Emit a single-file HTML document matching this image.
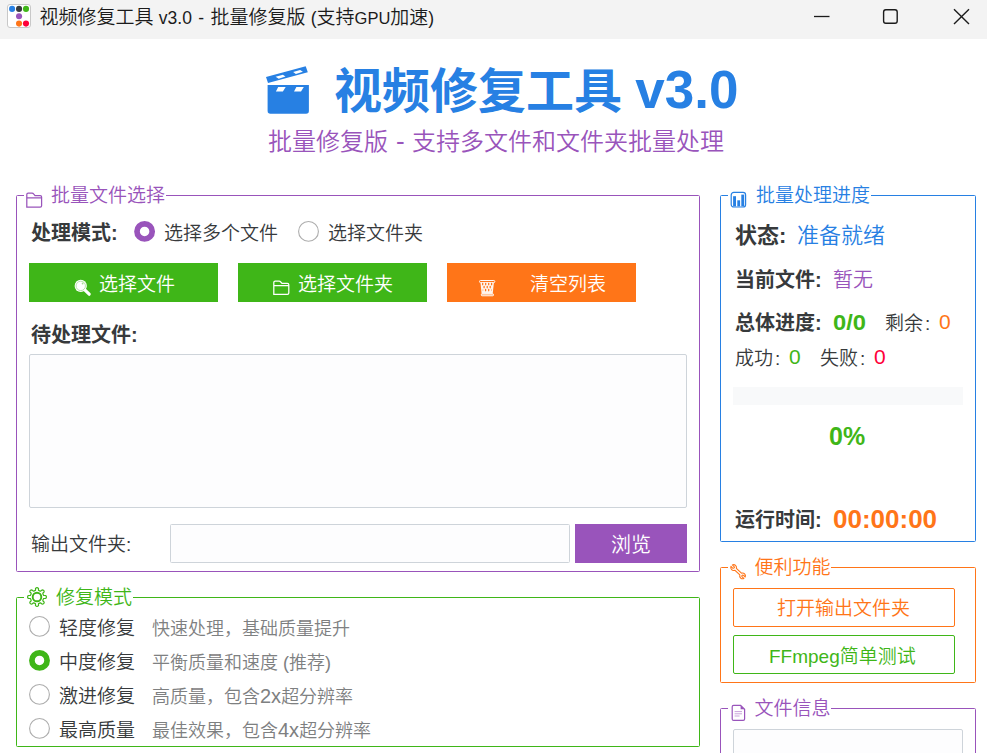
<!DOCTYPE html>
<html lang="zh-CN">
<head>
<meta charset="utf-8">
<title>视频修复工具 v3.0</title>
<style>
html,body{margin:0;padding:0;}
body{width:987px;height:753px;overflow:hidden;background:#fff;position:relative;
  font-family:"Liberation Sans","Noto Sans CJK SC",sans-serif;color:#373a3c;font-weight:350;}
.abs{position:absolute;white-space:nowrap;}
.t{position:absolute;white-space:nowrap;line-height:1;}
.b{font-weight:700;}
#titlebar{position:absolute;left:0;top:0;width:987px;height:39px;background:#f3f3f3;}
.box{position:absolute;border:1px solid;border-radius:1.5px;box-sizing:border-box;}
.legend{position:absolute;background:#fff;white-space:nowrap;line-height:1;}
.btn{position:absolute;box-sizing:border-box;color:#fff;}
.field{position:absolute;box-sizing:border-box;border:1px solid #ced4da;background:#fdfdfe;border-radius:1.5px;}
.c{margin-left:2px;}
.t span{line-height:0;}
svg{overflow:visible;}
</style>
</head>
<body>
<!-- title bar -->
<div id="titlebar">
  <svg class="abs" style="left:7px;top:4px" width="24" height="24" viewBox="0 0 24 24">
    <rect x="0.5" y="0.5" width="23" height="23" rx="2.5" fill="#fff" stroke="#c8c8c8"/>
    <circle cx="5.1" cy="4.9" r="3.05" fill="#2780e3"/>
    <circle cx="12.05" cy="4.9" r="3.05" fill="#373a3c"/>
    <circle cx="19" cy="4.9" r="3.05" fill="#3fb618"/>
    <circle cx="12.05" cy="12.2" r="3.05" fill="#9954bb"/>
    <circle cx="12.05" cy="19.6" r="3.05" fill="#ff7518"/>
    <circle cx="19" cy="19.6" r="3.05" fill="#ff0039"/>
  </svg>
  <div class="t" id="tbtext" style="left:39.5px;top:8px;font-size:19px;color:#1b1b1b;">视频修复工具 <span style="font-size:17.5px;word-spacing:1.5px">v3.0 - </span>批量修复版 <span style="font-size:17.5px">(</span>支持<span style="font-size:16.5px">GPU</span>加速<span style="font-size:17.5px">)</span></div>
  <svg class="abs" style="left:800px;top:0" width="187" height="38" viewBox="0 0 187 38">
    <path d="M14 16.5H29.5" stroke="#1b1b1b" stroke-width="1.3" fill="none"/>
    <rect x="83.6" y="9.7" width="13.6" height="13.6" rx="2.2" stroke="#1b1b1b" stroke-width="1.4" fill="none"/>
    <path d="M154 9.3L169 24M169 9.3L154 24" stroke="#1b1b1b" stroke-width="1.4" fill="none"/>
  </svg>
</div>

<!-- header -->
<svg class="abs" style="left:260px;top:60px" width="56" height="60" viewBox="0 0 56 60">
  <g fill="#2780e3">
    <path d="M6 17.1 L45.7 6.2 L47.8 12.2 L8 22.9 Z"/>
    <path d="M7.6 24.9 H48.9 V51 Q48.9 53.8 46.1 53.8 H10.4 Q7.6 53.8 7.6 51 Z"/>
  </g>
  <g fill="#fff">
    <path d="M15.6 16.8 L22.9 14.7 L25.5 16.6 L18.7 18.7 Z"/>
    <path d="M33.1 12 L40.1 9.9 L42.9 11.7 L35.9 14.1 Z"/>
    <path d="M18.2 27.1 H25.7 L22.9 31.4 H15.9 Z"/>
    <path d="M36.4 27.1 H43.8 L41 31.4 H34 Z"/>
  </g>
</svg>
<div class="t b" id="title" style="left:334px;top:68px;font-size:48px;color:#2780e3;">视频修复工具 <span style="font-size:53px">v3.0</span></div>
<div class="t" id="sub1" style="left:268px;top:130px;font-size:24px;color:#9954bb;">批量修复版</div>
<div class="t" id="sub2" style="left:396px;top:128px;font-size:26px;color:#9954bb;">-</div>
<div class="t" id="sub3" style="left:412px;top:130px;font-size:24px;color:#9954bb;">支持多文件和文件夹批量处理</div>

<!-- batch file selection -->
<div class="box" style="left:16px;top:195px;width:684px;height:377px;border-color:#9954bb;"></div>
<div class="legend" style="left:24px;top:184px;width:141.5px;height:24px;"></div>
<svg class="abs" style="left:26px;top:192px" width="17" height="17" viewBox="0 0 17 17">
  <path d="M0.8 15.2 V2.6 Q0.8 1.2 2.2 1.2 H6 Q7 1.2 7.8 2.2 L9 3.6 H14.2 Q15.6 3.6 15.6 5 V13.8 Q15.6 15.2 14.2 15.2 Z M0.8 5.8 H15.6" fill="none" stroke="#9954bb" stroke-width="1.25"/>
</svg>
<div class="t" id="lg1" style="left:51px;top:186px;font-size:19px;color:#9954bb;">批量文件选择</div>

<div class="t b" id="mode" style="left:31px;top:223px;font-size:20px;">处理模式:</div>
<svg class="abs" style="left:134px;top:221px" width="21" height="21"><circle cx="10.6" cy="10.4" r="7.6" fill="#fff" stroke="#9954bb" stroke-width="5.7"/></svg>
<div class="t" id="r1" style="left:164px;top:224px;font-size:19px;">选择多个文件</div>
<svg class="abs" style="left:298px;top:221px" width="21" height="21"><circle cx="10.5" cy="10.4" r="9.9" fill="#fff" stroke="#adadad" stroke-width="1.1"/></svg>
<div class="t" id="r2" style="left:328px;top:224px;font-size:19px;">选择文件夹</div>

<div class="btn" style="left:29px;top:263px;width:189px;height:39px;background:#3fb618;"></div>
<div class="btn" style="left:238px;top:263px;width:189px;height:39px;background:#3fb618;"></div>
<div class="btn" style="left:447px;top:263px;width:189px;height:39px;background:#ff7518;"></div>
<!-- magnifier -->
<svg class="abs" style="left:73px;top:278px" width="20" height="20" viewBox="0 0 20 20">
  <path d="M12 12.2 L16.2 16.2" stroke="#fff" stroke-width="3.2" stroke-linecap="round"/>
  <circle cx="7.75" cy="7.9" r="6.1" fill="#fff"/>
  <circle cx="7.75" cy="7.9" r="4.7" fill="none" stroke="#a5dc92" stroke-width="0.8"/>
  <circle cx="9.6" cy="5.5" r="0.9" fill="#a5dc92"/>
</svg>
<div class="t" id="b1" style="left:99px;top:275px;font-size:19px;color:#fff;">选择文件</div>
<!-- folder white -->
<svg class="abs" style="left:273px;top:280px" width="17" height="16" viewBox="0 0 17 16">
  <path d="M0.8 14.4 V2.4 Q0.8 1 2.2 1 H6 Q7 1 7.8 2 L9 3.4 H14.4 Q15.8 3.4 15.8 4.8 V13 Q15.8 14.4 14.4 14.4 Z M0.8 5.6 H15.8" fill="none" stroke="#fff" stroke-width="1.25"/>
</svg>
<div class="t" id="b2" style="left:298px;top:275px;font-size:19px;color:#fff;">选择文件夹</div>
<!-- trash -->
<svg class="abs" style="left:472px;top:272px" width="30" height="30" viewBox="0 0 30 30">
  <path d="M8.5 10.8 H21.9 L20.7 21.8 H9.6 Z" fill="#fff" fill-opacity="0.93"/>
  <rect x="7.5" y="8.5" width="15.3" height="2.1" rx="1" fill="none" stroke="#fff" stroke-width="0.95"/>
  <rect x="9.3" y="21.8" width="12.2" height="2" rx="0.8" fill="#fff" fill-opacity="0.45" stroke="#fff" stroke-width="0.9"/>
  <g fill="#ff7518">
    <ellipse cx="10.7" cy="12.1" rx="0.7" ry="1.3"/><ellipse cx="13.7" cy="12.1" rx="0.7" ry="1.3"/><ellipse cx="16.7" cy="12.1" rx="0.7" ry="1.3"/><ellipse cx="19.6" cy="12.1" rx="0.7" ry="1.3"/>
    <ellipse cx="12.1" cy="15.1" rx="0.7" ry="1.3"/><ellipse cx="15.2" cy="15.1" rx="0.7" ry="1.3"/><ellipse cx="18.2" cy="15.1" rx="0.7" ry="1.3"/>
    <ellipse cx="13.6" cy="18.1" rx="0.7" ry="1.3"/><ellipse cx="16.7" cy="18.1" rx="0.7" ry="1.3"/>
    <ellipse cx="10.9" cy="18.1" rx="0.45" ry="1.1" fill-opacity="0.5"/><ellipse cx="19.4" cy="18.1" rx="0.45" ry="1.1" fill-opacity="0.5"/>
  </g>
</svg>
<div class="t" id="b3" style="left:530px;top:275px;font-size:19px;color:#fff;">清空列表</div>

<div class="t b" id="pend" style="left:31px;top:325px;font-size:20px;">待处理文件:</div>
<div class="field" style="left:29px;top:354px;width:658px;height:154px;border-radius:2px;"></div>

<div class="t" id="outl" style="left:31px;top:535px;font-size:19px;">输出文件夹:</div>
<div class="field" style="left:170px;top:524px;width:400px;height:39px;"></div>
<div class="btn" style="left:575px;top:524px;width:112px;height:39px;background:#9954bb;"></div>
<div class="t" id="brow" style="left:611px;top:535px;font-size:20px;color:#fff;">浏览</div>

<!-- repair mode -->
<div class="box" style="left:16px;top:597px;width:684px;height:150px;border-color:#3fb618;"></div>
<div class="legend" style="left:24px;top:586px;width:108.5px;height:24px;"></div>
<svg class="abs" style="left:27px;top:587px" width="20" height="20" viewBox="-10 -10 20 20">
  <g fill="none" stroke="#3fb618" stroke-width="1.2">
    <path d="M-1.48 -6.74 L-1.48 -8.67 Q0.00 -10.20 1.48 -8.67 L1.48 -6.74 Q2.45 -5.91 3.72 -5.81 L5.09 -7.18 Q7.21 -7.21 7.18 -5.09 L5.81 -3.72 Q5.91 -2.45 6.74 -1.48 L8.67 -1.48 Q10.20 0.00 8.67 1.48 L6.74 1.48 Q5.91 2.45 5.81 3.72 L7.18 5.09 Q7.21 7.21 5.09 7.18 L3.72 5.81 Q2.45 5.91 1.48 6.74 L1.48 8.67 Q0.00 10.20 -1.48 8.67 L-1.48 6.74 Q-2.45 5.91 -3.72 5.81 L-5.09 7.18 Q-7.21 7.21 -7.18 5.09 L-5.81 3.72 Q-5.91 2.45 -6.74 1.48 L-8.67 1.48 Q-10.20 0.00 -8.67 -1.48 L-6.74 -1.48 Q-5.91 -2.45 -5.81 -3.72 L-7.18 -5.09 Q-7.21 -7.21 -5.09 -7.18 L-3.72 -5.81 Q-2.45 -5.91 -1.48 -6.74 Z" stroke-linejoin="round"/>
    <circle cx="0" cy="0" r="4.3" stroke-width="1.9"/>
  </g>
</svg>
<div class="t" id="lg2" style="left:56px;top:588px;font-size:19px;color:#3fb618;">修复模式</div>

<svg class="abs" style="left:29px;top:616px" width="21" height="21"><circle cx="10.5" cy="10.4" r="9.9" fill="#fff" stroke="#adadad" stroke-width="1.1"/></svg>
<div class="t" id="m1" style="left:59px;top:619px;font-size:19px;">轻度修复</div>
<div class="t" id="d1" style="left:152px;top:620px;font-size:18px;color:#7e8081;">快速处理，基础质量提升</div>
<svg class="abs" style="left:29px;top:650px" width="21" height="21"><circle cx="10.5" cy="10.4" r="7.6" fill="#fff" stroke="#3fb618" stroke-width="5.7"/></svg>
<div class="t" id="m2" style="left:59px;top:653px;font-size:19px;">中度修复</div>
<div class="t" id="d2" style="left:152px;top:654px;font-size:18px;color:#7e8081;">平衡质量和速度 (推荐)</div>
<svg class="abs" style="left:29px;top:684px" width="21" height="21"><circle cx="10.5" cy="10.4" r="9.9" fill="#fff" stroke="#adadad" stroke-width="1.1"/></svg>
<div class="t" id="m3" style="left:59px;top:687px;font-size:19px;">激进修复</div>
<div class="t" id="d3" style="left:152px;top:688px;font-size:18px;color:#7e8081;">高质量，包含<span style="font-size:20px">2x</span>超分辨率</div>
<svg class="abs" style="left:29px;top:718px" width="21" height="21"><circle cx="10.5" cy="10.4" r="9.9" fill="#fff" stroke="#adadad" stroke-width="1.1"/></svg>
<div class="t" id="m4" style="left:59px;top:721px;font-size:19px;">最高质量</div>
<div class="t" id="d4" style="left:152px;top:722px;font-size:18px;color:#7e8081;">最佳效果，包含<span style="font-size:20px">4x</span>超分辨率</div>

<!-- progress -->
<div class="box" style="left:720px;top:195px;width:256px;height:347px;border-color:#2780e3;"></div>
<div class="legend" style="left:728px;top:184px;width:142.5px;height:24px;"></div>
<svg class="abs" style="left:730px;top:191px" width="17" height="17" viewBox="0 0 17 17">
  <rect x="1.2" y="1.4" width="14.4" height="14.6" rx="2.6" fill="#fff" stroke="#2780e3" stroke-width="1.2"/>
  <rect x="3.1" y="5.2" width="2.9" height="10.2" fill="#2780e3"/>
  <rect x="7.3" y="9.3" width="2.8" height="6.1" fill="#2780e3"/>
  <rect x="11.3" y="3.6" width="2.9" height="11.8" fill="#2780e3"/>
</svg>
<div class="t" id="lg3" style="left:756px;top:186px;font-size:19px;color:#2780e3;">批量处理进度</div>

<div class="t b" id="st" style="left:735px;top:225px;font-size:22px;">状态:</div>
<div class="t" id="stv" style="left:797px;top:225px;font-size:22px;color:#2780e3;">准备就绪</div>
<div class="t b" id="cur" style="left:735px;top:270px;font-size:20px;">当前文件:</div>
<div class="t" id="curv" style="left:833px;top:270px;font-size:20px;color:#9954bb;">暂无</div>
<div class="t b" id="tot" style="left:735px;top:313px;font-size:20px;">总体进度:</div>
<div class="t b" id="totv" style="left:833px;top:312px;font-size:22px;transform:scaleX(1.08);transform-origin:0 50%;color:#3fb618;">0/0</div>
<div class="t" id="rem" style="left:885px;top:314px;font-size:19px;">剩余<span class="c">:</span></div>
<div class="t" id="remv" style="left:939px;top:311px;font-size:21px;color:#ff7518;">0</div>
<div class="t" id="suc" style="left:735px;top:349px;font-size:19px;">成功<span class="c">:</span></div>
<div class="t" id="sucv" style="left:789px;top:346px;font-size:21px;color:#3fb618;">0</div>
<div class="t" id="fail" style="left:820px;top:349px;font-size:19px;">失败<span class="c">:</span></div>
<div class="t" id="failv" style="left:874px;top:346px;font-size:21px;color:#ff0039;">0</div>
<div class="abs" style="left:733px;top:387px;width:230px;height:18px;background:#f8f9fa;"></div>
<div class="t b" id="pct" style="left:829px;top:424px;font-size:25px;color:#3fb618;">0%</div>
<div class="t b" id="rt" style="left:735px;top:510px;font-size:20px;">运行时间:</div>
<div class="t b" id="rtv" style="left:833px;top:506px;font-size:26px;color:#ff7518;">00:00:00</div>

<!-- tools -->
<div class="box" style="left:720px;top:567px;width:256px;height:116px;border-color:#ff7518;"></div>
<div class="legend" style="left:728px;top:556px;width:103px;height:24px;"></div>
<svg class="abs" style="left:729px;top:563px" width="18" height="18" viewBox="0 0 18 18">
  <g transform="translate(9.1,8.7) rotate(43) scale(0.85)">
    <path d="M-4.1 -1.4 A3.4 3.4 0 0 0 -10.38 -1.2 L-7.6 -1.2 A1.2 1.2 0 0 1 -7.6 1.2 L-10.38 1.2 A3.4 3.4 0 0 0 -4.1 1.4 L4.1 1.4 A3.4 3.4 0 0 0 10.38 1.2 L7.6 1.2 A1.2 1.2 0 0 1 7.6 -1.2 L10.38 -1.2 A3.4 3.4 0 0 0 4.1 -1.4 Z" fill="#fff" stroke="#ff7518" stroke-width="1.3" stroke-linejoin="round"/>
  </g>
</svg>
<div class="t" id="lg4" style="left:754.5px;top:558px;font-size:19px;color:#ff7518;">便利功能</div>
<div class="btn" style="left:733px;top:588px;width:222px;height:39px;border:1px solid #ff7518;border-radius:2px;"></div>
<div class="t" id="ob" style="left:777px;top:599px;font-size:19px;color:#ff7518;">打开输出文件夹</div>
<div class="btn" style="left:733px;top:635px;width:222px;height:39px;border:1px solid #3fb618;border-radius:2px;"></div>
<div class="t" id="fb" style="left:769px;top:647px;font-size:19px;color:#3fb618;"><span style="font-size:19px">FFmpeg</span>简单测试</div>

<!-- file info -->
<div class="box" style="left:720px;top:708px;width:256px;height:80px;border-color:#9954bb;"></div>
<div class="legend" style="left:728px;top:697px;width:103px;height:24px;"></div>
<svg class="abs" style="left:731px;top:704px" width="15" height="18" viewBox="0 0 15 18">
  <path d="M2.6 1.3 H9.6 L13.6 5.3 V15 Q13.6 16.4 12.2 16.4 H2.6 Q1.2 16.4 1.2 15 V2.7 Q1.2 1.3 2.6 1.3 Z" fill="#fff" stroke="#9954bb" stroke-width="1.2"/>
  <path d="M9.6 1.3 V5.3 H13.6 Z" fill="#9954bb"/>
  <path d="M3.6 7.6 H11 M3.6 9.8 H11 M3.6 12 H8.6" stroke="#c9a3db" stroke-width="1" fill="none"/>
</svg>
<div class="t" id="lg5" style="left:754.5px;top:699px;font-size:19px;color:#9954bb;">文件信息</div>
<div class="field" style="left:733px;top:729px;width:230px;height:60px;border-radius:2px;"></div>

</body>
</html>
